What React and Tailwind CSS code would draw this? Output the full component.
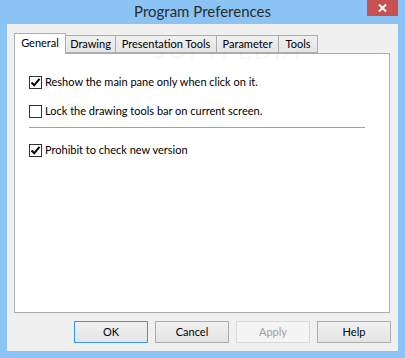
import React from "react";

const font = { fontFamily: 'Lato, "Liberation Sans", sans-serif' };

function Check({ checked }) {
  return (
    <span className="w-[13px] h-[13px] border border-[#333333] bg-white flex items-center justify-center shrink-0">
      {checked && (
        <svg width="11" height="11" viewBox="0 0 11 11">
          <path d="M1.5 5.5 L4.2 8.3 L9.5 1.8" fill="none" stroke="#000" strokeWidth="2" />
        </svg>
      )}
    </span>
  );
}

function Option({ checked, label }) {
  return (
    <div className="h-[18px] flex items-center gap-[3px] text-[11px] text-black whitespace-nowrap">
      <Check checked={checked} />
      <span>{label}</span>
    </div>
  );
}

const tabs = [
  { label: "Drawing", w: "w-[50px]" },
  { label: "Presentation Tools", w: "w-[101px]" },
  { label: "Parameter", w: "w-[62px]" },
  { label: "Tools", w: "w-[39px]" },
];

function Btn({ label, focus, disabled }) {
  let cls = "border-[#acacac] bg-gradient-to-b from-[#f0f0f0] to-[#e5e5e5] text-black";
  if (focus) cls = "border-[#3399ff] bg-gradient-to-b from-[#f0f0f0] to-[#e5e5e5] text-black";
  if (disabled) cls = "border-[#d9d9d9] bg-[#f4f4f4] text-[#a0a0a0]";
  return (
    <div className={`w-[74px] h-[22px] border flex items-center justify-center text-[11px] ${cls}`}>
      {label}
    </div>
  );
}

export default function App() {
  return (
    <div className="relative w-[405px] h-[358px] bg-[#8bc3f5] flex flex-col" style={font}>
      {/* TITLE BAR */}
      <div className="relative h-[24px] flex items-center justify-center">
        <span className="text-[15px] text-[#2b2b2b] leading-none -mt-[2px]">Program Preferences</span>
        <div className="absolute right-[7px] top-0 w-[31px] h-[16px] bg-[#c75050] flex items-center justify-center">
          <svg width="9" height="8" viewBox="0 0 9 8">
            <path d="M1 0.5 L8 7.5 M8 0.5 L1 7.5" stroke="#fff" strokeWidth="2" />
          </svg>
        </div>
      </div>

      {/* CLIENT */}
      <div className="mx-[7px] h-[327px] bg-[#f0f0f0] flex flex-col pl-[7px] pt-[9px]">
        {/* TABS */}
        <div className="flex items-start h-[20px] text-[11px] text-black relative z-10 whitespace-nowrap">
          <div className="w-[52px] h-[21px] bg-white border border-b-0 border-[#adadad] flex items-center justify-center pb-[2px]">
            General
          </div>
          {tabs.map((t) => (
            <div
              key={t.label}
              className={`${t.w} h-[18px] mt-[2px] border border-l-0 border-[#acacac] bg-gradient-to-b from-[#f0f0f0] to-[#e5e5e5] flex items-center justify-center pt-px`}
            >
              {t.label}
            </div>
          ))}
        </div>

        {/* PANEL */}
        <div className="w-[376px] h-[260px] bg-white border border-[#adadad] pl-[14px] pt-[19px] flex flex-col">
          <Option checked label="Reshow the main pane only when click on it." />
          <div className="mt-[11px]">
            <Option label="Lock the drawing tools bar on current screen." />
          </div>
          <div className="mt-[7px] w-[336px] h-px bg-[#a0a0a0]" />
          <div className="mt-[13px]">
            <Option checked label="Prohibit to check new version" />
          </div>
        </div>

        {/* BUTTONS */}
        <div className="mt-[8px] flex justify-end gap-[7px] pr-[7px]">
          <Btn label="OK" focus />
          <Btn label="Cancel" />
          <Btn label="Apply" disabled />
          <Btn label="Help" />
        </div>
      </div>

      {/* WATERMARK */}
      <div className="absolute left-[152px] top-[32px] text-[24px] font-bold tracking-[2px] text-black/[0.03] pointer-events-none select-none">
        SOFTPEDIA
      </div>
    </div>
  );
}
